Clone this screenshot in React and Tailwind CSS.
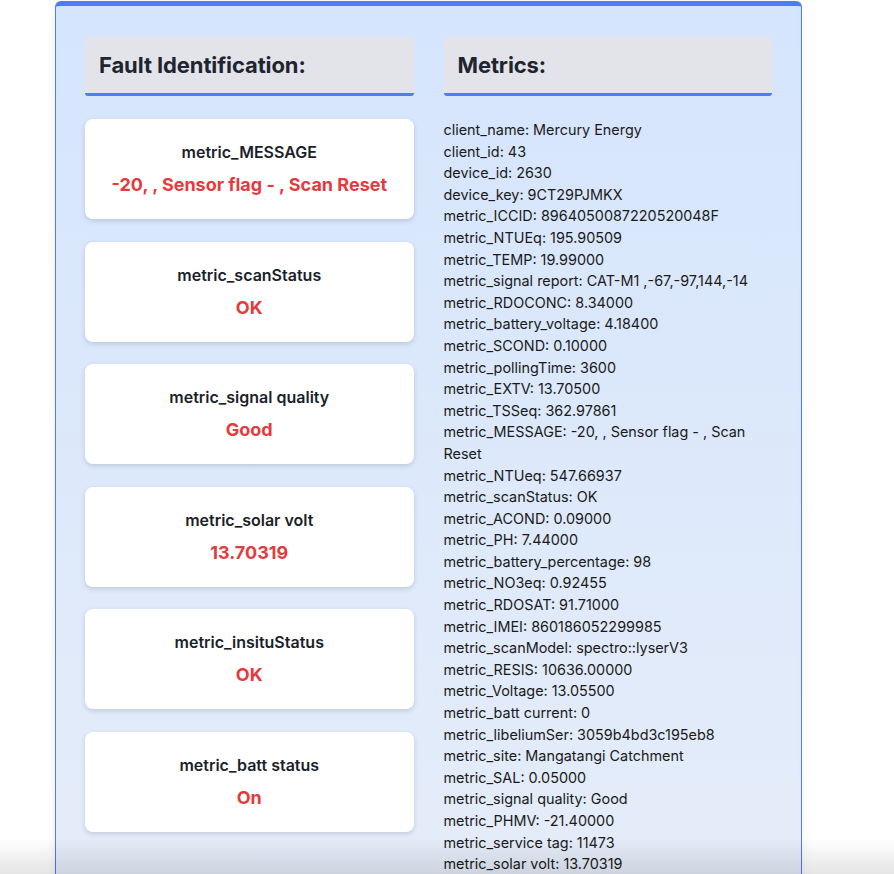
import React from 'react'

const faults = [
  { label: 'metric_MESSAGE', value: '-20, , Sensor flag - , Scan Reset' },
  { label: 'metric_scanStatus', value: 'OK' },
  { label: 'metric_signal quality', value: 'Good' },
  { label: 'metric_solar volt', value: '13.70319' },
  { label: 'metric_insituStatus', value: 'OK' },
  { label: 'metric_batt status', value: 'On' },
]

const metrics = [
  'client_name: Mercury Energy',
  'client_id: 43',
  'device_id: 2630',
  'device_key: 9CT29PJMKX',
  'metric_ICCID: 8964050087220520048F',
  'metric_NTUEq: 195.90509',
  'metric_TEMP: 19.99000',
  'metric_signal report: CAT-M1 ,-67,-97,144,-14',
  'metric_RDOCONC: 8.34000',
  'metric_battery_voltage: 4.18400',
  'metric_SCOND: 0.10000',
  'metric_pollingTime: 3600',
  'metric_EXTV: 13.70500',
  'metric_TSSeq: 362.97861',
  'metric_MESSAGE: -20, , Sensor flag - , Scan Reset',
  'metric_NTUeq: 547.66937',
  'metric_scanStatus: OK',
  'metric_ACOND: 0.09000',
  'metric_PH: 7.44000',
  'metric_battery_percentage: 98',
  'metric_NO3eq: 0.92455',
  'metric_RDOSAT: 91.71000',
  'metric_IMEI: 860186052299985',
  'metric_scanModel: spectro::lyserV3',
  'metric_RESIS: 10636.00000',
  'metric_Voltage: 13.05500',
  'metric_batt current: 0',
  'metric_libeliumSer: 3059b4bd3c195eb8',
  'metric_site: Mangatangi Catchment',
  'metric_SAL: 0.05000',
  'metric_signal quality: Good',
  'metric_PHMV: -21.40000',
  'metric_service tag: 11473',
  'metric_solar volt: 13.70319',
  'metric_insituStatus: OK',
  'metric_batt status: On',
]

function SectionHeader({ title }) {
  return (
    <div className="h-[59px] flex items-center pl-[14px] bg-[#e2e4ea] rounded-t-[3px] rounded-b-[3px] border-b-[3px] border-[#4d7cf3]">
      <h2 className="text-[22px] font-bold text-[#1f2430] tracking-[-0.1px]">{title}</h2>
    </div>
  )
}

function FaultCard({ label, value }) {
  return (
    <div className="h-[100px] bg-white rounded-[8px] shadow-[0_2px_5px_rgba(40,60,100,0.18)] flex flex-col items-center justify-center text-center">
      <div className="text-[16px] font-semibold text-[#1b1f2a] leading-[22px]">{label}</div>
      <div className="mt-[10px] text-[18px] font-bold text-[#e53a3e] leading-[24px]">{value}</div>
    </div>
  )
}

export default function App() {
  return (
    <div className="min-h-screen bg-white overflow-hidden" style={{ fontFamily: 'Inter, "Noto Sans", sans-serif' }}>
      <div className="ml-[55px] mt-px w-[747px] rounded-t-[6px] border-t-[5px] border-x border-[#4d7cf3] bg-gradient-to-b from-[#d5e5fd] to-[#e6edf8] shadow-[0_0_12px_rgba(0,0,0,0.06)] px-[29px] pt-[31px] pb-[40px]">
        <div className="grid grid-cols-2 gap-[30px]">
          <div>
            <SectionHeader title="Fault Identification:" />
            <div className="mt-[23px] flex flex-col gap-[22.5px]">
              {faults.map((f) => (
                <FaultCard key={f.label} label={f.label} value={f.value} />
              ))}
            </div>
          </div>
          <div>
            <SectionHeader title="Metrics:" />
            <ul className="mt-[23px] text-[14.4px] leading-[21.6px] text-[#1a1a1a]">
              {metrics.map((m) => (
                <li key={m}>{m}</li>
              ))}
            </ul>
          </div>
        </div>
      </div>
      <div className="fixed inset-x-0 bottom-0 h-[36px] pointer-events-none bg-gradient-to-b from-transparent to-[rgba(0,0,0,0.1)]" />
    </div>
  )
}
